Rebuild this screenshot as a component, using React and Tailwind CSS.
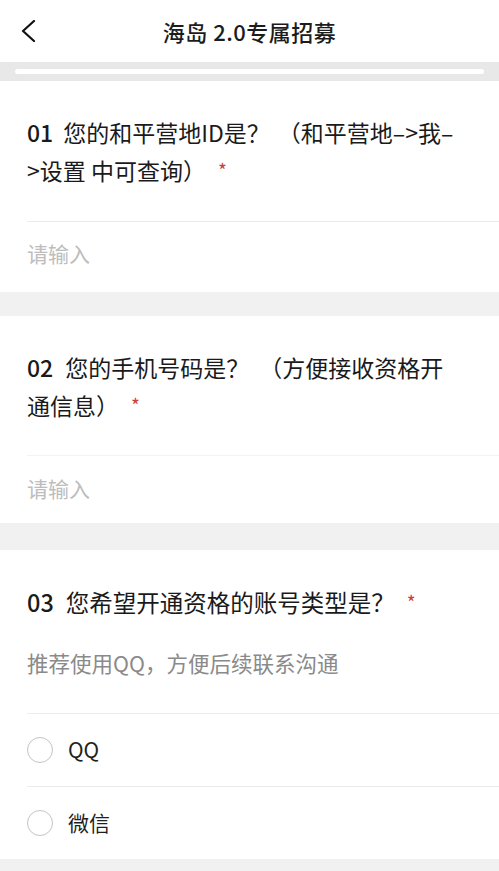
import { useState } from "react";

const font = { fontFamily: '"Noto Sans CJK SC", "Noto Sans", sans-serif' };

function Star() {
  return <span className="ml-[12px] text-[19px] text-[#c8423a] align-[2px]">*</span>;
}

function Radio({ label, checked, onClick }) {
  return (
    <button
      onClick={onClick}
      className="flex h-[72px] w-full items-center gap-[15px] text-left"
    >
      <span className="flex h-[26px] w-[26px] items-center justify-center rounded-full border-[1.5px] border-[#c4c4c4]">
        {checked && <span className="h-[14px] w-[14px] rounded-full bg-[#3b7cf5]" />}
      </span>
      <span className="text-[21px] text-[#1f1f1f]">{label}</span>
    </button>
  );
}

export default function App() {
  const [form, setForm] = useState({ id: "", phone: "", account: "" });

  const handleChange = (e) => {
    setForm({ ...form, [e.target.name]: e.target.value });
  };

  return (
    <div className="min-h-[871px] w-full bg-[#f1f1f1] text-[#1a1a1a]" style={font}>
      {/* header */}
      <div className="grid h-[62px] grid-cols-[60px_1fr_60px] items-center bg-white">
        <button className="flex h-full items-center pl-[21px]">
          <svg width="16" height="22" viewBox="0 0 16 22" fill="none">
            <polyline
              points="13,1 2,11 13,21"
              stroke="#111"
              strokeWidth="2.2"
              strokeLinecap="round"
              strokeLinejoin="round"
            />
          </svg>
        </button>
        <h1 className="text-center text-[22px] font-medium tracking-[0.5px] text-[#1c1c1c]">
          海岛 2.0专属招募
        </h1>
        <div />
      </div>

      {/* progress strip */}
      <div className="h-[19px] bg-[#e8e8e8] px-[15px] pt-[7px]">
        <div className="h-[5px] rounded-full bg-white" />
      </div>

      {/* question 1 */}
      <div className="bg-white">
        <div className="px-[27px] pt-[33px] pb-[32px] text-[23px] leading-[37px]">
          <span className="font-medium">01</span>
          <span className="ml-[10px]">您的和平营地ID是？</span>
          <span className="ml-[8px]">（和平营地–&gt;我–</span>
          <br />
          <span>&gt;设置 中可查询）</span>
          <Star />
        </div>
        <div className="ml-[27px] border-t border-[#ececec]">
          <input
            name="id"
            value={form.id}
            onChange={handleChange}
            placeholder="请输入"
            className="block h-[70px] w-full pb-[9px] text-[21px] text-[#333] outline-none placeholder:text-[#bdbdbd]"
          />
        </div>
      </div>

      {/* question 2 */}
      <div className="mt-[24px] bg-white">
        <div className="px-[27px] pt-[32px] pb-[31px] text-[23px] leading-[38px]">
          <span className="font-medium">02</span>
          <span className="ml-[12px]">您的手机号码是？</span>
          <span className="ml-[10px]">（方便接收资格开</span>
          <br />
          <span>通信息）</span>
          <Star />
        </div>
        <div className="ml-[27px] border-t border-[#f3f3f3]">
          <input
            name="phone"
            value={form.phone}
            onChange={handleChange}
            placeholder="请输入"
            className="block h-[67px] w-full pb-[3px] text-[21px] text-[#333] outline-none placeholder:text-[#bdbdbd]"
          />
        </div>
      </div>

      {/* question 3 */}
      <div className="mt-[27px] bg-white">
        <div className="px-[27px] pt-[33px] text-[23.5px] leading-[38px]">
          <span className="font-medium">03</span>
          <span className="ml-[12px]">您希望开通资格的账号类型是？</span>
          <Star />
        </div>
        <p className="px-[27px] pt-[27px] pb-[35px] text-[21.5px] leading-[30px] text-[#8a8a8a]">
          推荐使用QQ，方便后续联系沟通
        </p>
        <div className="ml-[27px] border-t border-[#ededed]">
          <Radio
            label="QQ"
            checked={form.account === "qq"}
            onClick={() => setForm({ ...form, account: "qq" })}
          />
        </div>
        <div className="ml-[27px] border-t border-[#ececec]">
          <Radio
            label="微信"
            checked={form.account === "wechat"}
            onClick={() => setForm({ ...form, account: "wechat" })}
          />
        </div>
      </div>
    </div>
  );
}
